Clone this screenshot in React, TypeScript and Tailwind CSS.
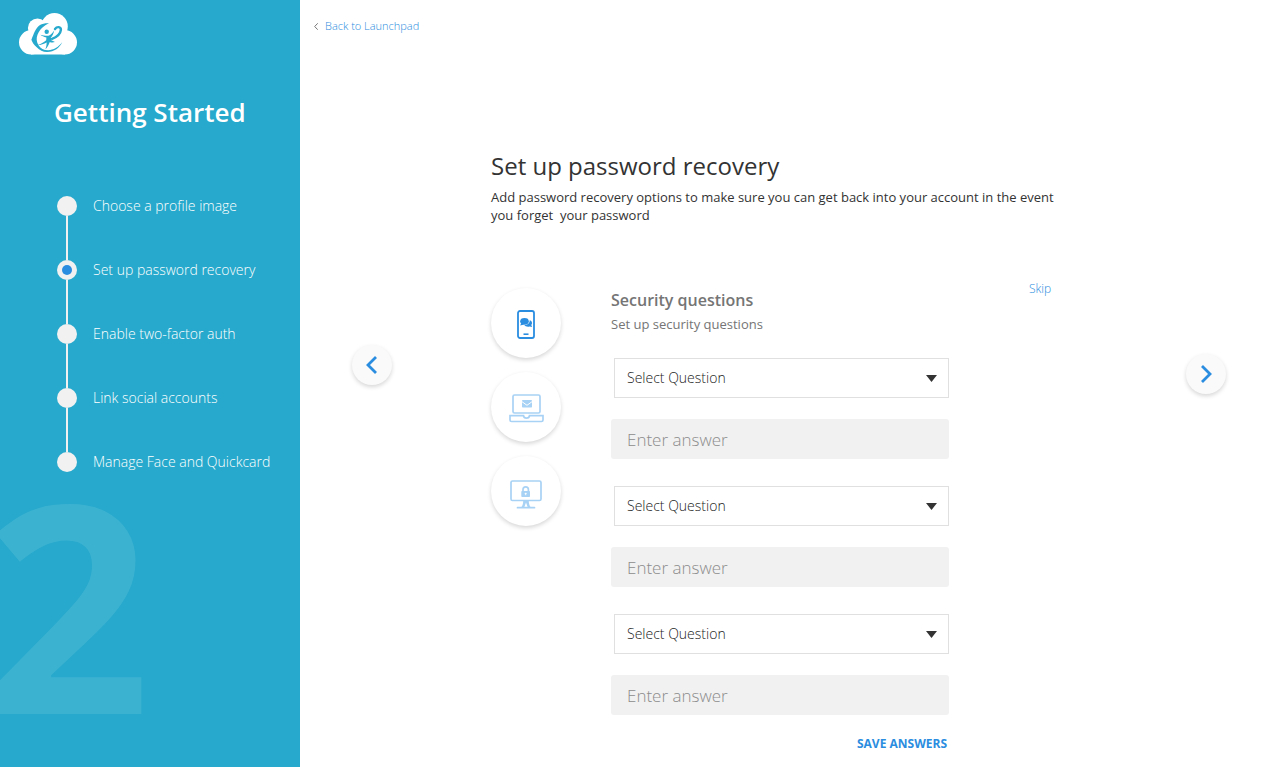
import { useState } from "react";
import type { ReactNode } from "react";

const steps = [
  "Choose a profile image",
  "Set up password recovery",
  "Enable two-factor auth",
  "Link social accounts",
  "Manage Face and Quickcard",
];

function Logo() {
  return (
    <svg width="58" height="42" viewBox="19 13 58 42" aria-hidden="true">
      <g fill="#fff">
        <circle cx="31.200" cy="42.300" r="12.200" />
        <circle cx="64.800" cy="42.300" r="12.200" />
        <circle cx="37.500" cy="28" r="9.600" />
        <circle cx="54.500" cy="26.300" r="13.300" />
        <path d="M31 28h34v26.500H31z" />
      </g>
      <g fill="#26a9cc">
        <path d="M49 23.200C45.500 23 42.300 23.700 40 25c-4.500 3-6.200 9-8.600 14.700 1 3 2.600 5.200 5.300 7.500 3 3 6.500 4.800 10.500 4.700 7 0 12.500-4 15-9.600-4 5-8.600 7.800-14 8-4.500 0-7.700-2-10-5.600-1.700-3.200-2-6.500-.7-9.900 1.200-3 2.500-4.900 4.700-7C44.300 25.800 46.200 24.500 49 23.200z" />
        <path d="M40.500 34.700c2.500.8 5 1.300 8 1.100 2.300-1.200 4-3 5.700-5.400-.6 3-1.700 5.300-3.400 7.200l.6 2.600 3.600 1.900c-2.200.5-4 .4-5.200-.2-1.100 3-2.300 5.200-4.400 7.500.8-2.400 1.300-4.700 1.300-7-2.800 1.500-5.700 2.600-9.200 2.700 3.500-1.300 6.200-2.800 8.700-4.900l.2-2.800c-2.600-.6-4.500-1.400-5.900-2.700z" />
        <circle cx="46.700" cy="31.700" r="2.200" />
      </g>
      <path
        d="M55 29c2-2.800 6-2.500 5.900.8-.4 3.800-4.200 7.200-8.900 9"
        fill="none"
        stroke="#26a9cc"
        strokeWidth="2.400"
        strokeLinecap="round"
      />
    </svg>
  );
}

function PhoneIcon() {
  return (
    <svg width="18" height="29" viewBox="0 0 18 29" aria-hidden="true">
      <rect x="1" y="1" width="16" height="27" rx="2" fill="none" stroke="#2b8de0" strokeWidth="1.800" />
      <ellipse cx="7.500" cy="11.300" rx="4.300" ry="3.400" fill="#2b8de0" />
      <path d="M4.200 13l-1 2.600 3.800-1.200z" fill="#2b8de0" />
      <path d="M12.700 10.300c2.300.6 3.100 3 1.600 4.800l.8 2-2.500-.7c-2 .6-4.400 0-5.300-1.200 3.300-.2 5.600-2.200 5.400-4.900z" fill="#2b8de0" />
      <path d="M6.500 24.200h5" stroke="#2b8de0" strokeWidth="1.600" />
    </svg>
  );
}

function LaptopIcon() {
  return (
    <svg width="35" height="29" viewBox="0 0 35 29" aria-hidden="true">
      <g fill="none" stroke="#a8d2f5" strokeWidth="1.700">
        <rect x="4" y="1" width="27" height="18" rx="1.500" />
        <path d="M1 21.700h13.500c.2 1.700 1.200 2.500 3 2.500s2.800-.8 3-2.500H34V26a1.500 1.500 0 0 1-1.500 1.500h-30A1.500 1.500 0 0 1 1 26z" />
      </g>
      <rect x="13" y="6" width="10" height="7.500" rx=".7" fill="#a8d2f5" />
      <path d="M13 7.700l5 3.600 5-3.600" fill="none" stroke="#fff" strokeWidth="1" />
    </svg>
  );
}

function MonitorIcon() {
  return (
    <svg width="32" height="29" viewBox="0 0 32 29" className="mt-1" aria-hidden="true">
      <g fill="none" stroke="#a8d2f5" strokeWidth="1.700">
        <rect x="1" y="1" width="30" height="19.500" rx="1.500" />
        <path d="M7.500 27.700h17" strokeLinecap="round" />
        <path d="M13 12V9.500a2.700 2.700 0 0 1 5.400 0V12" />
      </g>
      <path d="M13.200 20.500h5.600c0 3.200.6 5.400 2.200 7h-3.200l-1.800-5-1.800 5H11c1.600-1.600 2.200-3.800 2.200-7z" fill="#a8d2f5" />
      <rect x="11.300" y="11" width="8.700" height="6" rx=".8" fill="#a8d2f5" />
      <path d="M15.700 12.800v2.400M14.700 13.600h2" stroke="#fff" strokeWidth=".9" />
    </svg>
  );
}

function ArrowButton({ label, path }: { label: string; path: string }) {
  return (
    <button
      type="button"
      aria-label={label}
      className="flex size-10 shrink-0 cursor-pointer items-center justify-center rounded-full bg-[#fafafa] shadow-[0_2px_4px_rgba(0,0,0,0.16)]"
    >
      <svg width="14" height="20" viewBox="0 0 14 20" fill="none" stroke="#2b8de0" strokeWidth="2.800" aria-hidden="true">
        <path d={path} />
      </svg>
    </button>
  );
}

function MethodButton({ label, children }: { label: string; children: ReactNode }) {
  return (
    <button
      type="button"
      aria-label={label}
      className="flex size-[70px] cursor-pointer items-center justify-center rounded-full bg-white pt-0.5 shadow-[0_2px_4px_rgba(0,0,0,0.16)]"
    >
      {children}
    </button>
  );
}

function Question({ index }: { index: number }) {
  return (
    <div className="flex flex-col gap-[21px]">
      <div className="relative ml-[3px]">
        <select
          aria-label={`Security question ${index}`}
          className="h-10 w-full appearance-none border border-[#e0e0e0] bg-white px-3 text-sm font-light text-[#222]"
        >
          <option>Select Question</option>
        </select>
        <svg width="11" height="7" viewBox="0 0 11 7" className="pointer-events-none absolute top-[17px] right-3" aria-hidden="true">
          <path d="M0 0h11L5.500 7z" fill="#333" />
        </svg>
      </div>
      <input
        type="text"
        aria-label={`Answer ${index}`}
        placeholder="Enter answer"
        className="h-10 w-full rounded-[3px] bg-[#f1f1f1] px-4 text-[17px] font-light text-[#333] placeholder:text-[#8c8c8c]"
      />
    </div>
  );
}

export default function App() {
  const [current] = useState(1);
  return (
    <div className="flex min-h-screen bg-white font-['Open_Sans',sans-serif] text-[#333]">
      <aside className="relative w-[300px] shrink-0 overflow-hidden bg-[#26a9cc] text-white">
        <div className="pt-[13px] pl-[19px]">
          <Logo />
        </div>
        <h2 className="mt-[39px] pl-[54px] text-[26px] leading-9 font-semibold">Getting Started</h2>
        <ol className="mt-[66px] flex flex-col gap-11 pl-[57px]">
          {steps.map((step, i) => (
            <li key={step} className="relative flex h-5 items-center gap-4">
              {i < steps.length - 1 && <span className="absolute top-5 left-[9px] h-11 w-0.5 bg-[#f1f1f1]" />}
              <span className="flex size-5 items-center justify-center rounded-full bg-[#f1f1f1]">
                {i === current && <span className="size-2.5 rounded-full bg-[#2b8de0]" />}
              </span>
              <span className="text-sm leading-5 font-light">{step}</span>
            </li>
          ))}
        </ol>
        <span className="pointer-events-none absolute top-[497px] -left-[15px] text-[290px] leading-[210px] font-bold text-white/10">
          {current + 1}
        </span>
      </aside>

      <main className="flex-1">
        <nav className="flex pt-4 pl-[14px]">
          <a href="#launchpad" className="flex items-center gap-[7px] text-[11px] leading-5 font-light text-[#2b8de0]">
            <svg width="4" height="7" viewBox="0 0 4 7" fill="none" stroke="#777" aria-hidden="true">
              <path d="M3.700.3L.7 3.500l3 3.200" />
            </svg>
            Back to Launchpad
          </a>
        </nav>

        <div className="flex items-start pt-[112px] pr-[55px] pb-3 pl-[52px]">
          <div className="pt-[197px]">
            <ArrowButton label="Previous step" path="M11 2L3 10l8 8" />
          </div>

          <section className="ml-[99px] w-[570px]">
            <h1 className="text-2xl leading-9">Set up password recovery</h1>
            <p className="mt-1 text-[13px] leading-[18px] whitespace-pre-wrap">
              {"Add password recovery options to make sure you can get back into your account in the event you forget  your password"}
            </p>

            <div className="mt-14 flex items-start">
              <div className="flex flex-col gap-[14px] pt-2">
                <MethodButton label="Text message">
                  <PhoneIcon />
                </MethodButton>
                <MethodButton label="Email">
                  <LaptopIcon />
                </MethodButton>
                <MethodButton label="Security questions">
                  <MonitorIcon />
                </MethodButton>
              </div>

              <form className="ml-[50px] w-[338px]" onSubmit={(e) => e.preventDefault()}>
                <h3 className="pt-2 leading-6 font-semibold text-[#757575]">Security questions</h3>
                <p className="mt-0.5 text-[13px] leading-5 text-[#757575]">Set up security questions</p>
                <div className="mt-6 flex flex-col gap-[27px]">
                  <Question index={1} />
                  <Question index={2} />
                  <Question index={3} />
                </div>
                <div className="mt-[19px] flex justify-end pr-0.5">
                  <button type="submit" className="cursor-pointer text-xs leading-5 font-bold text-[#2b8de0]">
                    SAVE ANSWERS
                  </button>
                </div>
              </form>

              <button type="button" className="ml-20 cursor-pointer text-xs leading-[18px] font-light text-[#2b8de0]">
                Skip
              </button>
            </div>
          </section>

          <div className="ml-auto pt-[206px]">
            <ArrowButton label="Next step" path="M3 2l8 8-8 8" />
          </div>
        </div>
      </main>
    </div>
  );
}
